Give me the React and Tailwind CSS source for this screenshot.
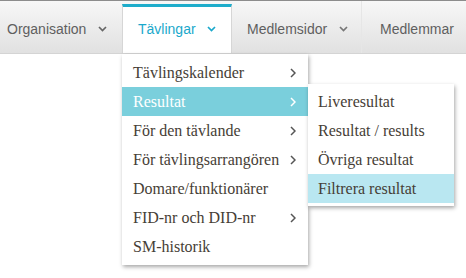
import React from 'react';

function ChevronDown({ className }) {
  return (
    <svg className={className} width="9" height="6" viewBox="0 0 9 6" fill="none">
      <path d="M1 1l3.5 3.5L8 1" stroke="currentColor" strokeWidth="1.7" />
    </svg>
  );
}

function ChevronRight({ className }) {
  return (
    <svg className={className} width="6" height="10" viewBox="0 0 6 10" fill="none">
      <path d="M1 1l4 4-4 4" stroke="currentColor" strokeWidth="1.5" />
    </svg>
  );
}

const menu = [
  { label: 'Tävlingskalender', sub: true },
  { label: 'Resultat', sub: true, active: true },
  { label: 'För den tävlande', sub: true },
  { label: 'För tävlingsarrangören', sub: true },
  { label: 'Domare/funktionärer' },
  { label: 'FID-nr och DID-nr', sub: true },
  { label: 'SM-historik' },
];

const results = ['Liveresultat', 'Resultat / results', 'Övriga resultat', 'Filtrera resultat'];

export default function App() {
  return (
    <div className="relative w-full h-[278px] bg-white overflow-hidden font-['Liberation_Sans',Arial,sans-serif]">
      <nav className="flex h-[54px] border-t border-[#8c8c8c] border-b border-b-[#d4d4d4] bg-gradient-to-b from-[#f7f7f7] to-[#e1e1e1] text-[14px] text-[#5f5f5f]">
        <div className="flex items-center w-[122px] pl-[7px] pt-[4px] gap-[12px]">
          <span>Organisation</span>
          <ChevronDown className="text-[#666]" />
        </div>
        <div className="relative flex items-center w-[110px] mt-[3px] pl-[15px] gap-[11px] bg-white border-t-[3px] border-[#1eadcb] border-x border-x-[#d6d6d6] text-[#1aa8cb]">
          <span className="-mt-[2px]">Tävlingar</span>
          <ChevronDown className="-mt-[2px] text-[#1aa8cb]" />
        </div>
        <div className="flex items-center w-[130px] pl-[15px] pt-[4px] gap-[12px] border-r border-[#e6e6e6]">
          <span>Medlemsidor</span>
          <ChevronDown className="text-[#777]" />
        </div>
        <div className="flex items-center pl-[18px] pt-[4px]">
          <span>Medlemmar</span>
        </div>
      </nav>

      <div className="absolute top-[54px] left-[122px] w-[186px] bg-white py-[4px] shadow-[1px_2px_4px_rgba(0,0,0,0.35)] font-['Liberation_Serif','Times_New_Roman',serif] text-[16px] text-[#463e36]">
        {menu.map((m) => (
          <div
            key={m.label}
            className={
              m.active
                ? 'relative flex h-[29px] items-center justify-between pl-[11px] pr-[12px] bg-[#7acfdc] text-white'
                : 'relative flex h-[29px] items-center justify-between pl-[11px] pr-[12px]'
            }
          >
            <span>{m.label}</span>
            {m.sub && <ChevronRight className={m.active ? 'text-white' : 'text-[#555]'} />}
            {m.active && (
              <div className="absolute left-[186px] top-[-3px] w-[146px] bg-white py-[3px] shadow-[1px_2px_4px_rgba(0,0,0,0.35)] text-[#463e36]">
                {results.map((r, i) => (
                  <div
                    key={r}
                    className={
                      i === 3
                        ? 'flex h-[29px] items-center pl-[10px] bg-[#b9e7f1]'
                        : 'flex h-[29px] items-center pl-[10px]'
                    }
                  >
                    {r}
                  </div>
                ))}
              </div>
            )}
          </div>
        ))}
      </div>
    </div>
  );
}
